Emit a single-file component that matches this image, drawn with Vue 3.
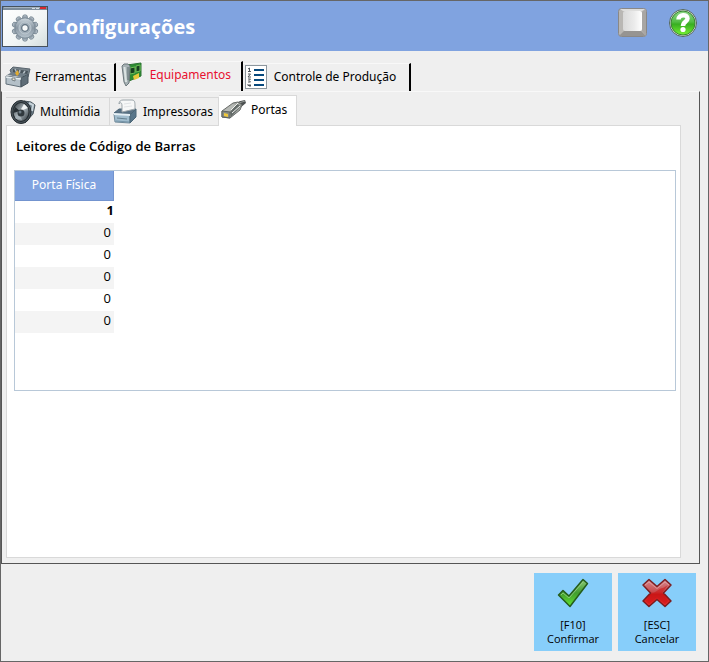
<template>
	<div class="window">
		<header class="title-bar">
			<svg class="title-icon" viewBox="0 0 46 41" aria-hidden="true">
				<defs>
					<linearGradient id="winBg" x1="0" y1="0" x2="1" y2="1">
						<stop offset="0" stop-color="#ffffff" />
						<stop offset="0.6" stop-color="#f1f5f5" />
						<stop offset="1" stop-color="#d3dddd" />
					</linearGradient>
					<linearGradient id="gear" x1="0" y1="0" x2="0" y2="1">
						<stop offset="0" stop-color="#c9d3da" />
						<stop offset="0.5" stop-color="#8997a3" />
						<stop offset="1" stop-color="#b4c1ca" />
					</linearGradient>
				</defs>
				<rect x="0.5" y="0.5" width="45" height="40" fill="url(#winBg)" stroke="#46525e" />
				<rect x="1" y="1" width="44" height="3" fill="#7c8c9c" />
				<path d="M2 1.500H44" stroke="#a5b3c0" />
				<path d="M30 2.500H33M34 2.500H37" stroke="#d5dce2" />
				<rect x="38" y="1" width="6" height="2" fill="#d9272e" />
				<g transform="translate(23 22)">
					<g fill="url(#gear)" stroke="#758591" stroke-width="0.800">
						<path v-for="n in 10" :key="n" :transform="`rotate(${ n * 36 })`" d="M-3 -8L-2 -12.500Q0 -14 2 -12.500L3 -8Z" />
						<circle r="9.700" />
					</g>
					<circle r="9.500" fill="url(#gear)" />
					<circle r="6" fill="#a3b0ba" stroke="#becad2" />
					<circle r="3.300" fill="#f7f9f9" stroke="#627381" stroke-width="1.300" />
				</g>
			</svg>
			<h1>Configurações</h1>
			<button class="icon-button" type="button" aria-label="Teclado">
				<svg width="30" height="30" viewBox="0 0 30 30">
					<defs>
						<linearGradient id="keyTop" x1="0" y1="0" x2="1" y2="0">
							<stop offset="0" stop-color="#d9d9d9" />
							<stop offset="0.6" stop-color="#ececec" />
							<stop offset="1" stop-color="#ffffff" />
						</linearGradient>
					</defs>
					<rect x="0.500" y="0.500" width="28" height="28" rx="3" fill="#b9b7b4" stroke="#8a8886" />
					<path d="M1 28L6 23H23L28 28Z" fill="#969492" />
					<path d="M28 1L24 4V23L28 28Z" fill="#a8a6a4" />
					<path d="M2 1H27L24 3H5Z" fill="#dededd" />
					<rect x="5" y="3" width="19" height="20" rx="2" fill="url(#keyTop)" />
				</svg>
			</button>
			<button class="icon-button help" type="button" aria-label="Ajuda">
				<svg width="30" height="30" viewBox="0 0 30 30">
					<defs>
						<linearGradient id="helpBg" x1="0" y1="0" x2="0" y2="1">
							<stop offset="0" stop-color="#8ed687" />
							<stop offset="0.450" stop-color="#53bd45" />
							<stop offset="0.550" stop-color="#38ae21" />
							<stop offset="1" stop-color="#77f233" />
						</linearGradient>
					</defs>
					<circle cx="15" cy="15" r="13.500" fill="#d9ded8" stroke="#52665c" />
					<circle cx="15" cy="15" r="12" fill="url(#helpBg)" stroke="#3a8733" />
					<path d="M10.500 11.500C10.500 6 19.500 6 19.500 10.500C19.500 14 15 13.500 15 18" fill="none" stroke="#ffffff" stroke-width="4.500" />
					<circle cx="15" cy="21.500" r="2.600" fill="#ffffff" />
				</svg>
			</button>
		</header>

		<!-- Main tabs -->
		<nav class="main-tabs" role="tablist">
			<button class="main-tab" type="button" role="tab" :aria-selected="mainTab === 'ferramentas'"
				:class="{ active: mainTab === 'ferramentas' }" @click="mainTab = 'ferramentas'">
				<svg width="26" height="24" viewBox="0 0 26 24">
					<path d="M5 5L8 2L25 4L23 12L7 10Z" fill="#77838b" stroke="#59656e" />
					<path d="M8 4L23 6L22 10L8 9Z" fill="#48535b" />
					<path d="M10 4L12 8M15 5L14 9M20 6L18 9" stroke="#b3bec5" stroke-width="1.500" />
					<path d="M1 11L16 13V22L1 19Z" fill="#b4c0c8" stroke="#62707a" />
					<path d="M16 13L23 9V18L16 22Z" fill="#5f6d77" stroke="#46535c" />
					<path d="M2 10L7 7L23 9L16 12Z" fill="#717e88" />
					<path d="M1 12L16 14" stroke="#e5edf0" stroke-width="1.500" />
					<path d="M10 8L13 5L14 9L12 11Z" fill="#e1ab2f" />
					<path d="M7 13H10V16L7 15Z" fill="#e8e2cf" stroke="#56636c" stroke-width="0.700" />
				</svg>
				<span>Ferramentas</span>
			</button>
			<button class="main-tab" type="button" role="tab" :aria-selected="mainTab === 'equipamentos'"
				:class="{ active: mainTab === 'equipamentos' }" @click="mainTab = 'equipamentos'">
				<svg width="22" height="26" viewBox="0 0 22 26">
					<path d="M6 3L20 1V14L8 19Z" fill="#2c8c32" stroke="#2c7432" />
					<path d="M9 6L14 5V11L9 12ZM15 4L19 3V9L15 10Z" fill="#163f20" stroke="#70bd58" />
					<path d="M12 14L18 11V16L13 18Z" fill="#e4c93b" />
					<path d="M1 4L3 2L7 2L9 4L8 21L5 24L3 20Z" fill="#a6b1b4" stroke="#6b777b" />
					<path d="M3.500 5L5 20" stroke="#dbe3e2" stroke-width="2" />
					<path d="M7 5V18" stroke="#5b6b6d" />
				</svg>
				<span>Equipamentos</span>
			</button>
			<button class="main-tab" type="button" role="tab" :aria-selected="mainTab === 'producao'"
				:class="{ active: mainTab === 'producao' }" @click="mainTab = 'producao'">
				<svg width="22" height="24" viewBox="0 0 22 24">
					<rect x="0.500" y="0.500" width="21" height="23" fill="#ffffff" stroke="#8c969d" />
					<path d="M9 5H19M9 10H19M9 15H19M9 20H19" stroke="#07497d" stroke-width="2" />
					<path d="M3 4L4.500 3V6M3 6.500H6M3 9H5.500L3 12H6M3 14H5.500L4 15.500L5.500 17H3M3 19V20.500H6M5 19V22" fill="none" stroke="#50565b" />
				</svg>
				<span>Controle de Produção</span>
			</button>
		</nav>

		<main class="panel">
			<!-- Sub tabs -->
			<nav class="sub-tabs" role="tablist">
				<button class="sub-tab" type="button" role="tab" :aria-selected="subTab === 'multimidia'"
					:class="{ active: subTab === 'multimidia' }" @click="subTab = 'multimidia'">
					<svg width="26" height="26" viewBox="0 0 26 26">
						<defs>
							<linearGradient id="cone" x1="0" y1="0" x2="1" y2="1">
								<stop offset="0" stop-color="#30373b" />
								<stop offset="0.500" stop-color="#aab5bb" />
								<stop offset="1" stop-color="#2c353b" />
							</linearGradient>
						</defs>
						<path d="M14 2L21 3L25 6L23 15L15 24Z" fill="#6a7b87" stroke="#48545c" />
						<path d="M19 4L23 6L22 12" fill="none" stroke="#c9d5dc" stroke-width="2" />
						<ellipse cx="11" cy="13" rx="10" ry="11.500" fill="#4a555c" stroke="#262d31" />
						<ellipse cx="11" cy="13" rx="8.500" ry="10" fill="#252c30" />
						<ellipse cx="11" cy="13" rx="7.500" ry="9" fill="url(#cone)" />
						<path d="M10 12L14 5L18 9Z" fill="#f0f3f4" />
						<path d="M9 14L5 19L12 21Z" fill="#a3afb5" />
						<path d="M10 12L5 8L3 14Z" fill="#262e33" />
						<circle cx="11" cy="14" r="3.500" fill="#30393e" />
						<circle cx="10" cy="13" r="1.500" fill="#6c7b84" />
					</svg>
					<span>Multimídia</span>
				</button>
				<button class="sub-tab" type="button" role="tab" :aria-selected="subTab === 'impressoras'"
					:class="{ active: subTab === 'impressoras' }" @click="subTab = 'impressoras'">
					<svg width="26" height="26" viewBox="0 0 26 26">
						<path d="M1 14L6 10H23L17 15Z" fill="#587184" stroke="#4d6678" />
						<path d="M6 5C6 2 8 1 10 1H19C22 1 22 4 22 7V10L9 13V7C9 3 7 3 6 5Z" fill="#f7f8f8" stroke="#9da6ab" />
						<path d="M11 5L18 4M11 8L19 7" stroke="#e0e3e5" />
						<path d="M1 15L17 16V24L2 23Z" fill="#a1bdce" stroke="#6f8898" />
						<path d="M17 16L23 10V18L17 24Z" fill="#587589" stroke="#4b6677" />
						<path d="M1 15L17 16" stroke="#e4eff5" stroke-width="2" />
						<path d="M4 19L14 20" stroke="#65808f" />
						<path d="M3 22L16 23" stroke="#7695a9" />
					</svg>
					<span>Impressoras</span>
				</button>
				<button class="sub-tab" type="button" role="tab" :aria-selected="subTab === 'portas'"
					:class="{ active: subTab === 'portas' }" @click="subTab = 'portas'">
					<svg width="26" height="22" viewBox="0 0 26 22">
						<path d="M16 5C18 1 21 2 24 1L25 4L19 9Z" fill="#4d5151" />
						<path d="M18 4L24 2" stroke="#909592" />
						<path d="M1 12L12 4L17 3L21 6L19 11L9 19L1 18Z" fill="#a3a6a2" stroke="#686c69" />
						<path d="M2 12L12 5L15 6L8 13Z" fill="#b7bab6" />
						<path d="M9 13L16 5L20 7L10 18Z" fill="#646b69" />
						<path d="M10 11L17 4M11 14L19 7" stroke="#f0f1ee" />
						<path d="M1 12L9 13V19L1 18Z" fill="#858a83" stroke="#5d625e" />
						<path d="M3 14L7 15V18L3 17Z" fill="#f0c83b" />
					</svg>
					<span>Portas</span>
				</button>
			</nav>

			<section class="sheet">
				<h2>Leitores de Código de Barras</h2>
				<div class="grid">
					<table>
						<thead>
							<tr>
								<th scope="col">Porta Física</th>
							</tr>
						</thead>
						<tbody>
							<tr v-for="( porta, i ) in portas" :key="i" :class="{ selected: i === selectedRow }" @click="selectedRow = i">
								<td>{{ porta }}</td>
							</tr>
						</tbody>
					</table>
				</div>
			</section>
		</main>

		<footer class="actions">
			<button class="action" type="button">
				<svg width="32" height="30" viewBox="0 0 32 30">
					<defs>
						<linearGradient id="check" x1="0" y1="0" x2="0" y2="1">
							<stop offset="0" stop-color="#8bc878" />
							<stop offset="0.500" stop-color="#419d30" />
							<stop offset="1" stop-color="#63e52f" />
						</linearGradient>
					</defs>
					<path d="M1.500 17L6 12.500L12 18L26 1.500L30.500 5.500L13 28.500Z" fill="url(#check)" stroke="#245c1c" stroke-width="1.500" stroke-linejoin="round" />
					<path d="M4 17L6 15L12 20L26 4" fill="none" stroke="#a3d392" stroke-opacity="0.700" />
				</svg>
				<span>[F10]</span>
				<span>Confirmar</span>
			</button>
			<button class="action" type="button">
				<svg width="32" height="30" viewBox="0 0 32 30">
					<defs>
						<linearGradient id="cross" x1="0" y1="0" x2="0" y2="1">
							<stop offset="0" stop-color="#d58c90" />
							<stop offset="0.450" stop-color="#c94c4e" />
							<stop offset="0.550" stop-color="#c91415" />
							<stop offset="1" stop-color="#ed3030" />
						</linearGradient>
					</defs>
					<path d="M2 7L8 1.500L16 8.500L24 1.500L30 7L22.500 15L30 23L24 28.500L16 21.500L8 28.500L2 23L9.500 15Z" fill="url(#cross)" stroke="#7b1d20" stroke-width="1.500" stroke-linejoin="round" />
					<path d="M4 7L8 4L16 10.500L24 4L28 7" fill="none" stroke="#eab3b5" stroke-opacity="0.600" />
					<path d="M10 16C14 15 18 10 22 10L27 7L21 15L27 23L24 26L16 19L8 26L5 23Z" fill="#cc1718" fill-opacity="0.600" />
				</svg>
				<span>[ESC]</span>
				<span>Cancelar</span>
			</button>
		</footer>
	</div>
</template>

<script setup>
import { ref } from 'vue'

const mainTab = ref( 'equipamentos' )
const subTab = ref( 'portas' )
const selectedRow = ref( 0 )
const portas = ref( [ 1, 0, 0, 0, 0, 0 ] )
</script>

<style>
body {
	margin: 0;
}
</style>

<style scoped>
.window {
	display: flex;
	flex-direction: column;
	box-sizing: border-box;
	min-height: 100vh;
	border: 1px solid #666666;
	background: #efefef;
	color: #000000;
	font-family: "Segoe UI", "Open Sans", "Noto Sans", sans-serif;
	font-size: 13px;
	line-height: 18px;
}

.window * {
	box-sizing: border-box;
}

button {
	margin: 0;
	padding: 0;
	border: 0;
	background: none;
	color: inherit;
	font: inherit;
	cursor: pointer;
}

svg {
	display: block;
	flex: none;
}

/* TITLE */
.title-bar {
	display: flex;
	align-items: center;
	height: 50px;
	padding: 0 10px 0 1px;
	background: #80a3e0;
}

.title-icon {
	width: 46px;
	height: 41px;
}

.title-bar h1 {
	flex: 1;
	margin: 2px 0 0 5px;
	color: #ffffff;
	font-size: 20px;
	font-weight: 700;
	line-height: 28px;
}

.icon-button {
	padding-bottom: 6px;
}

.help {
	margin-left: 20px;
}

/* MAIN TABS */
.main-tabs {
	display: flex;
	align-items: flex-end;
	padding: 10px 0 0 2px;
}

.main-tab,
.sub-tab,
th {
	font-family: "Segoe UI", "Noto Sans", sans-serif;
	font-size: 12px;
	white-space: nowrap;
}

.main-tab {
	display: flex;
	align-items: center;
	gap: 4px;
	min-width: 112px;
	height: 28px;
	padding: 0 7px 1px 2px;
	border-top: 1px solid #f8f8f8;
	border-right: 2px solid #000000;
}

.main-tab:last-child {
	gap: 7px;
	min-width: 168px;
}

.main-tab.active {
	min-width: 127px;
	height: 30px;
	gap: 7px;
	padding: 0 7px 4px 5px;
	color: #e81030;
}

/* PANEL */
.panel {
	display: flex;
	flex: 1;
	flex-direction: column;
	margin-right: 8px;
	padding: 2px 18px 5px 4px;
	border: 1px solid #555555;
	border-top-color: #f8f8f8;
}

.sub-tabs {
	z-index: 1;
	display: flex;
	align-items: flex-end;
	height: 31px;
}

.sub-tab {
	display: flex;
	align-items: center;
	gap: 4px;
	min-width: 104px;
	height: 28px;
	padding: 0 4px 0 4px;
	border: 1px solid #d9d9d9;
	border-width: 1px 1px 0 0;
}

.sub-tab:nth-child(2) {
	min-width: 109px;
	padding: 0 4px 0 3px;
}

.sub-tab.active {
	min-width: 78px;
	height: 31px;
	margin-bottom: -1px;
	padding: 0 8px 2px 2px;
	background: #ffffff;
}

.sheet {
	flex: 1;
	padding: 11px 4px 11px 7px;
	border: 1px solid #d9d9d9;
	background: #ffffff;
}

.sheet h2 {
	margin: 0 0 15px 2px;
	font-size: 13px;
	font-weight: 600;
	line-height: 18px;
}

.grid {
	min-height: 221px;
	border: 1px solid #b8c8d8;
}

table {
	width: 99px;
	border-spacing: 0;
}

th {
	height: 30px;
	padding: 0 0 1px;
	border-right: 1px solid #7394cf;
	border-bottom: 1px solid #7394cf;
	background: #80a3e0;
	color: #ffffff;
	font-weight: 400;
}

td {
	height: 22px;
	padding: 0 3px 4px 0;
	line-height: 18px;
	text-align: right;
}

tbody tr:nth-child(even) {
	background: #f4f4f4;
}

.selected td {
	padding-right: 0;
	font-weight: 700;
}

/* ACTIONS */
.actions {
	display: flex;
	justify-content: flex-end;
	gap: 6px;
	padding: 9px 12px 10px;
}

.action {
	display: flex;
	flex-direction: column;
	align-items: center;
	width: 78px;
	height: 78px;
	padding-top: 5px;
	background: #87cefa;
	font-size: 11px;
	line-height: 14px;
}

.action svg {
	margin-bottom: 10px;
}
</style>
